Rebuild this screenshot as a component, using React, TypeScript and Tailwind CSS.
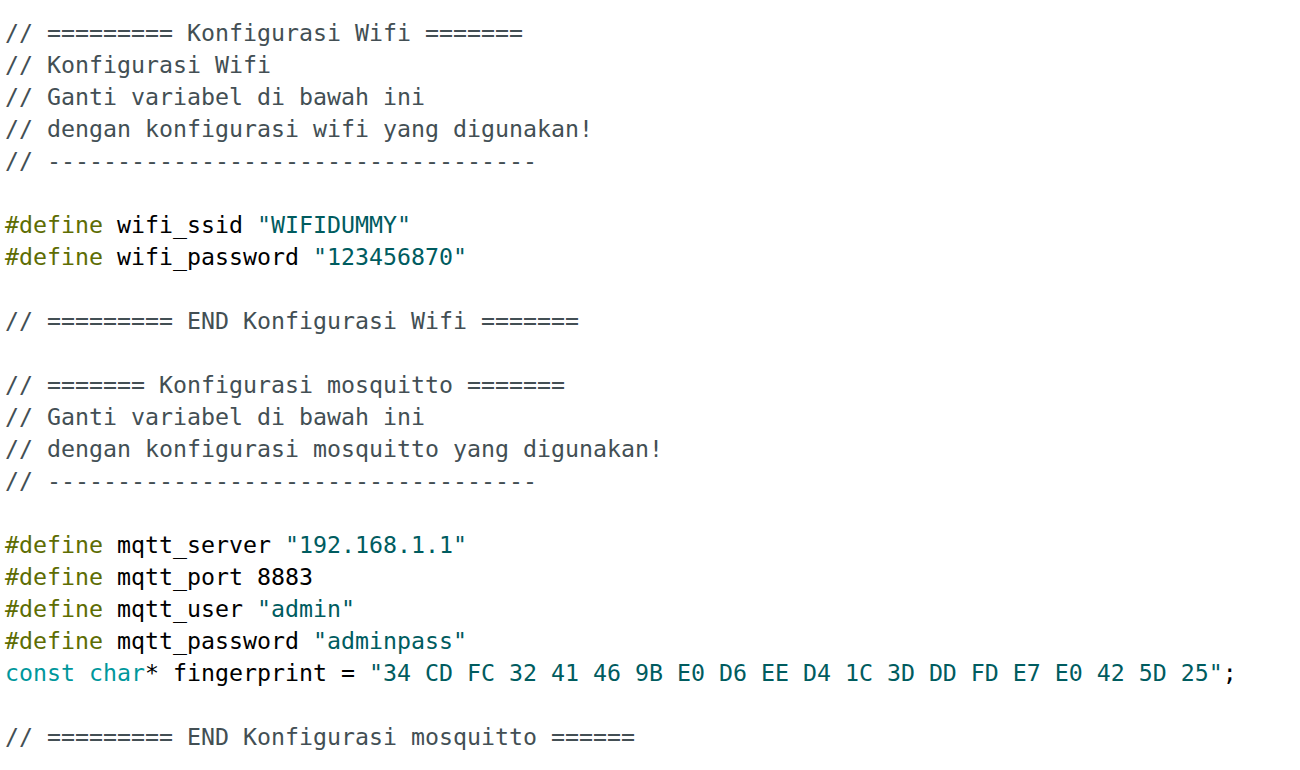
type Tok = [string, string]

const C = "text-[#434f54]"
const D = "text-[#5e6d03]"
const S = "text-[#005c5f]"
const K = "text-[#00979c]"
const T = "text-black"

const lines: Tok[][] = [
    [[C, "// ========= Konfigurasi Wifi ======="]],
    [[C, "// Konfigurasi Wifi"]],
    [[C, "// Ganti variabel di bawah ini"]],
    [[C, "// dengan konfigurasi wifi yang digunakan!"]],
    [[C, "// -----------------------------------"]],
    [],
    [[D, "#define"], [T, " wifi_ssid "], [S, "\"WIFIDUMMY\""]],
    [[D, "#define"], [T, " wifi_password "], [S, "\"123456870\""]],
    [],
    [[C, "// ========= END Konfigurasi Wifi ======="]],
    [],
    [[C, "// ======= Konfigurasi mosquitto ======="]],
    [[C, "// Ganti variabel di bawah ini"]],
    [[C, "// dengan konfigurasi mosquitto yang digunakan!"]],
    [[C, "// -----------------------------------"]],
    [],
    [[D, "#define"], [T, " mqtt_server "], [S, "\"192.168.1.1\""]],
    [[D, "#define"], [T, " mqtt_port 8883"]],
    [[D, "#define"], [T, " mqtt_user "], [S, "\"admin\""]],
    [[D, "#define"], [T, " mqtt_password "], [S, "\"adminpass\""]],
    [[K, "const"], [T, " "], [K, "char"], [T, "* fingerprint = "], [S, "\"34 CD FC 32 41 46 9B E0 D6 EE D4 1C 3D DD FD E7 E0 42 5D 25\""], [T, ";"]],
    [],
    [[C, "// ========= END Konfigurasi mosquitto ======"]],
]

export default function App() {
    return (
        <div className="w-[1300px] h-[770px] bg-white overflow-hidden pt-[17px] pl-[5px]">
            <pre className="font-['DejaVu_Sans_Mono',monospace] text-[23.25px] leading-[32px] m-0">
                {lines.map((line, i) => (
                    <div key={i} className="h-[32px] whitespace-pre">
                        {line.map(([cls, txt], j) => (
                            <span key={j} className={cls}>{txt}</span>
                        ))}
                    </div>
                ))}
            </pre>
        </div>
    )
}
